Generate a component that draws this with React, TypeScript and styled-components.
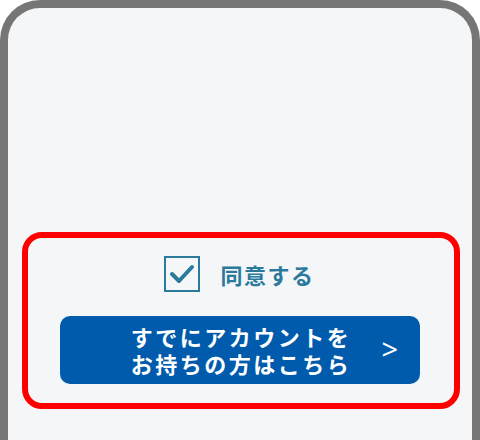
import React, {useState} from "react";
import styled, {createGlobalStyle} from "styled-components";

const GlobalStyle = createGlobalStyle`
    html, body {
        margin: 0;
        padding: 0;
        background: #ffffff;
    }
    body {
        font-family: "Noto Sans CJK JP", "Noto Sans", sans-serif;
    }
`;

const Frame = styled.div`
    box-sizing: border-box;
    width: 480px;
    height: 440px;
    border: 8px solid #767676;
    border-bottom: none;
    border-radius: 40px 40px 0 0;
    background: #f5f6f8;
    display: flex;
    flex-direction: column;
    justify-content: flex-end;
    padding: 0 0 31px 14px;
    overflow: hidden;
`;

const Highlight = styled.div`
    box-sizing: border-box;
    width: 438px;
    height: 177px;
    border: 6.5px solid #ff0000;
    border-radius: 20px;
    display: flex;
    flex-direction: column;
    align-items: center;
    padding-top: 18px;
    gap: 24px;
`;

const AgreeRow = styled.label`
    display: flex;
    align-items: center;
    gap: 20px;
    cursor: pointer;
    margin-left: -3px;
`;

const CheckBox = styled.span`
    box-sizing: border-box;
    width: 36px;
    height: 36px;
    border: 2.5px solid #2a7a9e;
    display: flex;
    align-items: center;
    justify-content: center;
`;

const AgreeText = styled.span`
    font-size: 22px;
    font-weight: 700;
    color: #2a7a9e;
    letter-spacing: 1.5px;
    line-height: 1;
`;

const LoginButton = styled.button`
    position: relative;
    box-sizing: border-box;
    width: 360px;
    height: 68px;
    margin-left: -2px;
    border: none;
    border-radius: 10px;
    background: #005bac;
    color: #ffffff;
    font-family: "Noto Sans CJK JP", "Noto Sans", sans-serif;
    cursor: pointer;
    padding: 0;
    display: flex;
    align-items: center;
    justify-content: center;
`;

const ButtonLabel = styled.span`
    display: flex;
    flex-direction: column;
    align-items: center;
    margin-left: 2px;
`;

const LabelLine = styled.span`
    display: block;
    font-size: 22px;
    font-weight: 700;
    line-height: 27px;
    height: 27px;
    letter-spacing: 2.5px;
    white-space: nowrap;
`;

const Arrow = styled.span`
    position: absolute;
    right: 22px;
    top: 50%;
    transform: translateY(-54%);
    font-family: "Noto Sans", sans-serif;
    font-weight: 400;
    font-size: 29px;
    line-height: 1;
`;

const CheckMark: React.FC = () => (
    <svg width="28" height="22" viewBox="0 0 28 22">
        <polyline points="4,11 11,18 24,4" fill="none" stroke="#2a7a9e" strokeWidth="4"
                  strokeLinecap="round" strokeLinejoin="round"/>
    </svg>
);

export default function App() {
    const [agreed, setAgreed] = useState(true);

    return (
        <>
            <GlobalStyle/>
            <Frame>
                <Highlight>
                    <AgreeRow onClick={() => setAgreed(!agreed)}>
                        <CheckBox>{agreed && <CheckMark/>}</CheckBox>
                        <AgreeText>同意する</AgreeText>
                    </AgreeRow>
                    <LoginButton>
                        <ButtonLabel>
                            <LabelLine>すでにアカウントを</LabelLine>
                            <LabelLine>お持ちの方はこちら</LabelLine>
                        </ButtonLabel>
                        <Arrow>&gt;</Arrow>
                    </LoginButton>
                </Highlight>
            </Frame>
        </>
    );
}
